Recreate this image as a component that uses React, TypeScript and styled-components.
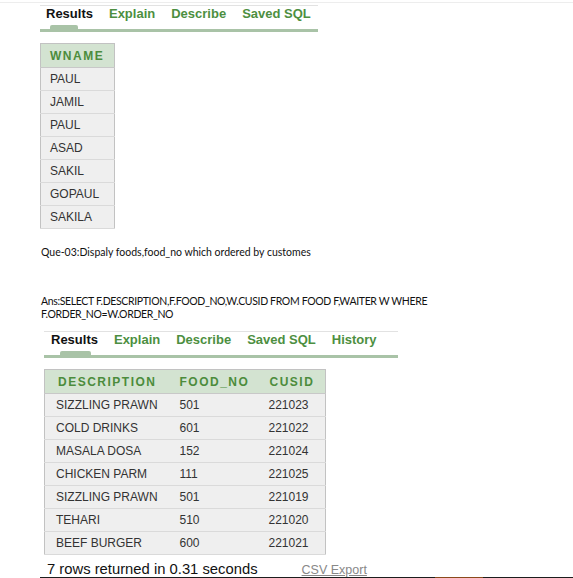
import React from 'react'
import styled, { createGlobalStyle } from 'styled-components'

const GlobalStyle = createGlobalStyle`
html, body {
  margin: 0;
  padding: 0;
  background: #ffffff;
}
body {
  font-family: "Liberation Sans", Arial, sans-serif;
  color: #222;
}
`;

const Page = styled.div`
position: relative;
width: 573px;
height: 578px;
overflow: hidden;
border-top: 1px solid #ededed;
margin-top: 2px;
box-sizing: border-box;
`;

const TabBar = styled.div<{ $left: number; $width: number; $top: number }>`
margin-left: ${p => p.$left}px;
margin-top: ${p => p.$top}px;
width: ${p => p.$width}px;
border-top: 1px solid #e2e2e2;
border-bottom: 3px solid #a9c3a7;
display: flex;
padding: 1px 0 0 0;
height: 22px;
box-sizing: content-box;
position: relative;
`;

const Tab = styled.div<{ $active?: boolean }>`
flex-shrink: 0;
white-space: nowrap;
font-size: 13px;
font-weight: bold;
padding: 0 8px;
line-height: 14px;
color: ${p => (p.$active ? '#111' : '#4d8f41')};
position: relative;
&:first-child {
  padding-left: ${p => (p.$active ? '6px' : '8px')};
}
`;

const Indicator = styled.div<{ $left: number; $width: number }>`
position: absolute;
left: ${p => p.$left}px;
bottom: 0;
width: ${p => p.$width}px;
height: 4px;
background: #a9c3a7;
border-radius: 2px 2px 0 0;
`;

const ResultTable = styled.table<{ $left: number; $top: number }>`
margin-left: ${p => p.$left}px;
margin-top: ${p => p.$top}px;
border-collapse: collapse;
border: 1px solid #c2c2c2;
font-size: 12px;
color: #333;
`;

const HeadCell = styled.th<{ $width: number }>`
width: ${p => p.$width}px;
height: 24px;
padding: 0 0 0 12px;
text-align: left;
background: #d3e3d1;
color: #4c8c3c;
font-size: 12px;
font-weight: bold;
letter-spacing: 1.5px;
box-sizing: border-box;
border-bottom: 1px solid #c8c8c8;
`;

const Cell = styled.td`
height: 23px;
padding: 0 0 0 10px;
background: #efefef;
border-bottom: 1px solid #dadada;
box-sizing: border-box;
white-space: nowrap;
`;

const Note = styled.div<{ $top: number; $tight?: boolean }>`
margin: ${p => p.$top}px 0 0 41px;
font-family: Lato, "Open Sans", sans-serif;
font-size: 10.5px;
line-height: 13px;
letter-spacing: ${p => (p.$tight ? '-0.35px' : '0')};
color: #111;
`;

const Footer = styled.div`
display: flex;
align-items: baseline;
margin: 6px 0 0 47px;
height: 18px;
`;

const RowCount = styled.span`
font-size: 14.8px;
color: #111;
`;

const CsvLink = styled.a`
margin-left: 44px;
font-size: 12.5px;
color: #888;
text-decoration: underline;
`;

const BottomEdge = styled.div`
position: absolute;
left: 40px;
right: 0;
bottom: 0;
height: 3px;
background: #1d1d1d;
&::after {
  content: '';
  position: absolute;
  left: 395px;
  width: 48px;
  top: 0;
  bottom: 0;
  background: #8a4a1c;
}
`;

const workers = ['PAUL', 'JAMIL', 'PAUL', 'ASAD', 'SAKIL', 'GOPAUL', 'SAKILA'];

const foods = [
  ['SIZZLING PRAWN', '501', '221023'],
  ['COLD DRINKS', '601', '221022'],
  ['MASALA DOSA', '152', '221024'],
  ['CHICKEN PARM', '111', '221025'],
  ['SIZZLING PRAWN', '501', '221019'],
  ['TEHARI', '510', '221020'],
  ['BEEF BURGER', '600', '221021'],
];

const App = () => {
  return (
    <>
      <GlobalStyle />
      <Page>
        <TabBar $left={40} $width={278} $top={2}>
          <Tab $active>Results</Tab>
          <Tab>Explain</Tab>
          <Tab>Describe</Tab>
          <Tab>Saved SQL</Tab>
          <Indicator $left={10} $width={28} />
        </TabBar>

        <ResultTable $left={40} $top={11}>
          <thead>
            <tr>
              <HeadCell $width={74} style={{ paddingLeft: 9 }}>WNAME</HeadCell>
            </tr>
          </thead>
          <tbody>
            {workers.map((w, i) => (
              <tr key={i}>
                <Cell style={{ paddingLeft: 9 }}>{w}</Cell>
              </tr>
            ))}
          </tbody>
        </ResultTable>

        <Note $top={17}>Que-03:Dispaly foods,food_no which ordered by customes</Note>
        <Note $top={36} $tight>
          Ans:SELECT F.DESCRIPTION,F.FOOD_NO,W.CUSID FROM FOOD F,WAITER W WHERE
          <br />
          F.ORDER_NO=W.ORDER_NO
        </Note>

        <TabBar $left={44} $width={354} $top={10}>
          <Tab $active style={{ paddingLeft: 7 }}>Results</Tab>
          <Tab>Explain</Tab>
          <Tab>Describe</Tab>
          <Tab>Saved SQL</Tab>
          <Tab>History</Tab>
          <Indicator $left={16} $width={31} />
        </TabBar>

        <ResultTable $left={44} $top={11}>
          <thead>
            <tr>
              <HeadCell $width={123} style={{ paddingLeft: 13 }}>DESCRIPTION</HeadCell>
              <HeadCell $width={90}>FOOD_NO</HeadCell>
              <HeadCell $width={68}>CUSID</HeadCell>
            </tr>
          </thead>
          <tbody>
            {foods.map((f, i) => (
              <tr key={i}>
                <Cell style={{ paddingLeft: 11 }}>{f[0]}</Cell>
                <Cell style={{ paddingLeft: 12 }}>{f[1]}</Cell>
                <Cell style={{ paddingLeft: 11 }}>{f[2]}</Cell>
              </tr>
            ))}
          </tbody>
        </ResultTable>

        <Footer>
          <RowCount>7 rows returned in 0.31 seconds</RowCount>
          <CsvLink>CSV Export</CsvLink>
        </Footer>
        <BottomEdge />
      </Page>
    </>
  )
}

export default App
